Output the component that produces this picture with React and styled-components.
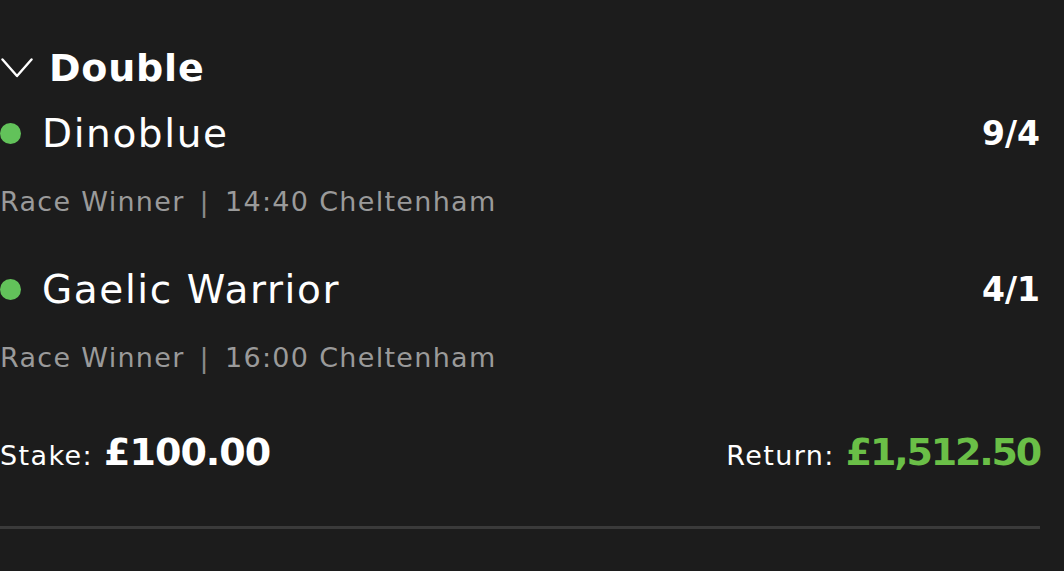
import styled, { createGlobalStyle } from "styled-components";

const GlobalStyle = createGlobalStyle`
  body {
    margin: 0;
    background: #1c1c1c;
    font-family: "DejaVu Sans", "Liberation Sans", sans-serif;
    color: #ffffff;
  }
`;

const selecciones = [
  { nombre: "Dinoblue", cuota: "9/4", mercado: "Race Winner", hora: "14:40 Cheltenham" },
  { nombre: "Gaelic Warrior", cuota: "4/1", mercado: "Race Winner", hora: "16:00 Cheltenham" },
];

function Chevron() {
  return (
    <svg width="32" height="20" viewBox="0 0 32 20" fill="none">
      <path d="M1.5 1.5 L16 18 L30.5 1.5" stroke="#ffffff" strokeWidth="2.4" strokeLinecap="round" strokeLinejoin="round" />
    </svg>
  );
}

function App() {
  return (
    <>
      <GlobalStyle />
      <Boleto>
        <Cabecera>
          <Chevron />
          <Titulo>Double</Titulo>
        </Cabecera>
        <Lista>
          {selecciones.map((s) => (
            <Seleccion key={s.nombre}>
              <FilaNombre>
                <Punto />
                <Nombre>{s.nombre}</Nombre>
                <Cuota>{s.cuota}</Cuota>
              </FilaNombre>
              <Detalle>
                <span>{s.mercado}</span>
                <Barra>|</Barra>
                <span>{s.hora}</span>
              </Detalle>
            </Seleccion>
          ))}
        </Lista>
        <Pie>
          <Importe>
            <Etiqueta>Stake:</Etiqueta>
            <Valor>£100.00</Valor>
          </Importe>
          <Importe>
            <Etiqueta>Return:</Etiqueta>
            <Valor $verde>£1,512.50</Valor>
          </Importe>
        </Pie>
        <Divisor />
      </Boleto>
    </>
  );
}

const Boleto = styled.div`
  padding: 40px 24px 0 0;
  display: flex;
  flex-direction: column;
`;

const Cabecera = styled.div`
  height: 56px;
  display: flex;
  align-items: center;
  gap: 16px;
  padding-left: 1px;
`;

const Titulo = styled.h1`
  margin: 0;
  font-size: 38px;
  font-weight: 700;
  letter-spacing: 0.8px;
`;

const Lista = styled.div`
  display: flex;
  flex-direction: column;
  gap: 20px;
`;

const Seleccion = styled.div`
  display: flex;
  flex-direction: column;
`;

const FilaNombre = styled.div`
  height: 74px;
  display: flex;
  align-items: center;
`;

const Punto = styled.span`
  width: 21px;
  height: 21px;
  border-radius: 50%;
  background: #62c25a;
  margin-right: 21px;
  flex-shrink: 0;
`;

const Nombre = styled.span`
  flex: 1;
  font-size: 39px;
  font-weight: 400;
  letter-spacing: 1.6px;
`;

const Cuota = styled.span`
  font-size: 33px;
  font-weight: 700;
`;

const Detalle = styled.div`
  height: 62px;
  display: flex;
  align-items: center;
  gap: 15px;
  font-size: 27px;
  letter-spacing: 1.3px;
  color: #9a9a9a;
`;

const Barra = styled.span`
  color: #8a8a8a;
`;

const Pie = styled.div`
  margin-top: 32px;
  height: 64px;
  display: flex;
  align-items: center;
  justify-content: space-between;
`;

const Importe = styled.div`
  display: flex;
  align-items: baseline;
  gap: 11px;
`;

const Etiqueta = styled.span`
  font-size: 27px;
  letter-spacing: 1.4px;
  color: #ffffff;
`;

const Valor = styled.span`
  font-size: 38px;
  font-weight: 700;
  letter-spacing: ${(p) => (p.$verde ? "-2.2px" : "-1px")};
  color: ${(p) => (p.$verde ? "#6abf47" : "#ffffff")};
`;

const Divisor = styled.div`
  margin-top: 42px;
  height: 3px;
  background: #3a3a3a;
`;

export default App;
